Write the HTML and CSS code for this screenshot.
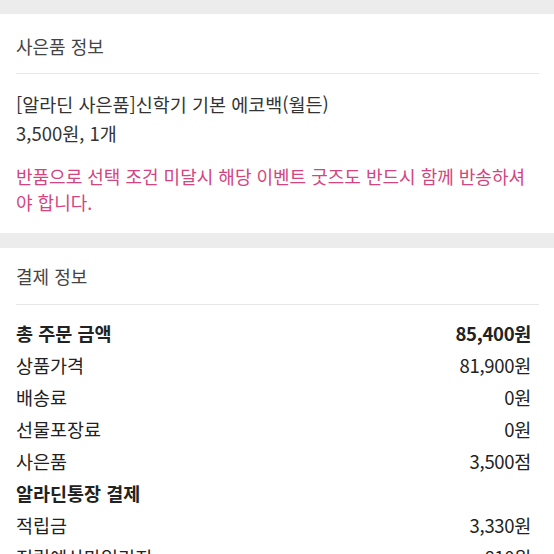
FILE: index.html
```html
<!DOCTYPE html>
<html lang="ko">
<head>
<meta charset="utf-8">
<link rel="stylesheet" href="styles.css">
</head>
<body>
<div class="band band-top"></div>
<section class="sec">
  <h2 class="sec-title">사은품 정보</h2>
  <div class="gift">
    <p class="gift-name">[알라딘 사은품]신학기 기본 에코백(월든)</p>
    <p class="gift-qty">3,500원, 1개</p>
  </div>
  <p class="notice">반품으로 선택 조건 미달시 해당 이벤트 굿즈도 반드시 함께 반송하셔야 합니다.</p>
</section>
<div class="band band-mid"></div>
<section class="sec">
  <h2 class="sec-title sec-title-2">결제 정보</h2>
  <div class="rows">
    <div class="row bold"><span>총 주문 금액</span><span class="val">85,400원</span></div>
    <div class="row"><span>상품가격</span><span class="val">81,900원</span></div>
    <div class="row"><span>배송료</span><span class="val">0원</span></div>
    <div class="row"><span>선물포장료</span><span class="val">0원</span></div>
    <div class="row"><span>사은품</span><span class="val">3,500점</span></div>
    <div class="row bold"><span>알라딘통장 결제</span><span class="val"></span></div>
    <div class="row"><span>적립금</span><span class="val">3,330원</span></div>
    <div class="row"><span>적립예상마일리지</span><span class="val">810원</span></div>
  </div>
</section>
</body>
</html>
```
FILE: styles.css
```css
html, body {
  margin: 0;
  padding: 0;
  background: #fff;
}
body {
  font-family: "Noto Sans CJK KR", "Noto Sans", sans-serif;
  color: #222;
  overflow: hidden;
}
p, h2 { margin: 0; }
.band {
  background: #ececec;
}
.band-top { height: 14px; }
.band-mid { height: 15px; }
.sec {
  padding: 0 15px 0 16px;
}
.sec-title {
  font-size: 18px;
  font-weight: 400;
  color: #444;
  line-height: 28px;
  padding: 18px 0 13px;
  border-bottom: 1px solid #e6e6e6;
}
.sec-title-2 {
  padding: 14px 0 14px;
}
.gift {
  padding-top: 16px;
  font-size: 18.5px;
  line-height: 29px;
  color: #333;
}
.notice {
  margin-top: 15px;
  padding-bottom: 18px;
  font-size: 18px;
  line-height: 26px;
  color: #d4447f;
  word-break: break-all;
}
.rows {
  padding-top: 12px;
}
.row {
  display: flex;
  justify-content: space-between;
  height: 32px;
  line-height: 32px;
  font-size: 18.5px;
  color: #222;
}
.row .val {
  padding-right: 8px;
  letter-spacing: -0.3px;
}
.row.bold {
  font-weight: 700;
}
```
